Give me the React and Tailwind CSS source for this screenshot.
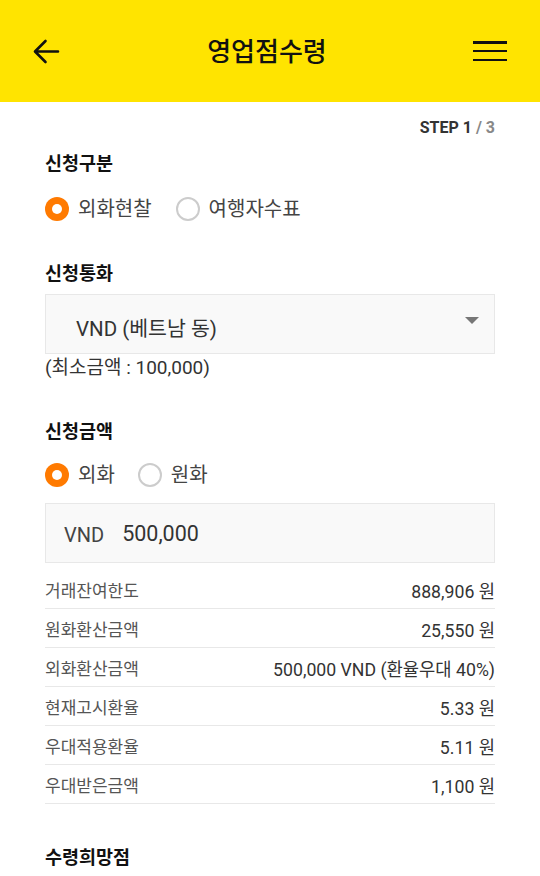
import React, { useState } from "react";

const font = { fontFamily: '"Roboto", "Noto Sans CJK KR", sans-serif' };

const Radio = ({ checked, label, onClick }) => (
  <button onClick={onClick} className="flex items-center gap-[9px]">
    {checked ? (
      <span className="w-[24px] h-[24px] rounded-full bg-[#ff7a00] flex items-center justify-center">
        <span className="w-[10px] h-[10px] rounded-full bg-white" />
      </span>
    ) : (
      <span className="w-[24px] h-[24px] rounded-full border-2 border-[#cccccc] bg-white" />
    )}
    <span className="text-[20px] text-[#444]">{label}</span>
  </button>
);

const Label = ({ children, className = "" }) => (
  <h2 className={`text-[18.5px] font-bold text-[#111] leading-none ${className}`}>{children}</h2>
);

export default function App() {
  const [type, setType] = useState("cash");
  const [unit, setUnit] = useState("foreign");

  const rows = [
    ["거래잔여한도", "888,906 원"],
    ["원화환산금액", "25,550 원"],
    ["외화환산금액", "500,000 VND (환율우대 40%)"],
    ["현재고시환율", "5.33 원"],
    ["우대적용환율", "5.11 원"],
    ["우대받은금액", "1,100 원"],
  ];

  return (
    <div className="bg-white min-h-screen" style={font}>
      {/* Header */}
      <div className="bg-[#ffe400] h-[102px] px-[33px] flex items-center justify-between">
        <button className="w-[28px] h-[26px] flex items-center">
          <svg width="27" height="25" viewBox="0 0 27 25" fill="none" stroke="#111" strokeWidth="2.6" strokeLinecap="round" strokeLinejoin="round">
            <path d="M25 12.5H2.5M12.5 2L2 12.5 12.5 23" />
          </svg>
        </button>
        <h1 className="text-[26px] font-medium text-[#111] mt-[2px]">영업점수령</h1>
        <button className="w-[34px] h-[26px] flex flex-col justify-between py-[3px]">
          <span className="block h-[2.5px] bg-[#111]" />
          <span className="block h-[2.5px] bg-[#111]" />
          <span className="block h-[2.5px] bg-[#111]" />
        </button>
      </div>

      <div className="px-[45px]">
        <p className="text-right text-[16px] font-bold text-[#333] mt-[18px] leading-none">
          STEP 1 <span className="text-[#888] font-bold">/ 3</span>
        </p>

        <Label className="mt-[19px]">신청구분</Label>
        <div className="flex items-center gap-[24px] mt-[20px]">
          <Radio checked={type === "cash"} label="외화현찰" onClick={() => setType("cash")} />
          <Radio checked={type === "check"} label="여행자수표" onClick={() => setType("check")} />
        </div>

        <Label className="mt-[41px]">신청통화</Label>
        <div className="mt-[11px] h-[60px] bg-[#f9f9f9] border border-[#e8e8e8] flex items-center justify-between pl-[30px] pr-[15px]">
          <span className="text-[20.5px] text-[#333] mt-[11px]">VND (베트남 동)</span>
          <svg width="14" height="7" viewBox="0 0 14 7" className="-mt-[7px]">
            <path d="M0 0h14L7 7z" fill="#777" />
          </svg>
        </div>
        <p className="text-[19px] text-[#333] leading-[28px]">(최소금액 : 100,000)</p>

        <Label className="mt-[41px]">신청금액</Label>
        <div className="flex items-center gap-[23px] mt-[18px]">
          <Radio checked={unit === "foreign"} label="외화" onClick={() => setUnit("foreign")} />
          <Radio checked={unit === "won"} label="원화" onClick={() => setUnit("won")} />
        </div>
        <div className="mt-[13px] h-[60px] bg-[#f9f9f9] border border-[#e8e8e8] flex items-center pl-[18px] gap-[18px]">
          <span className="text-[20px] text-[#444] mt-[5px]">VND</span>
          <span className="text-[21.5px] text-[#333] mt-[3px]">500,000</span>
        </div>

        <div className="mt-[7px]">
          {rows.map(([k, v]) => (
            <div key={k} className="h-[39px] flex items-center justify-between border-b border-[#e8e8e8] text-[17px]">
              <span className="text-[#555] mt-[7px]">{k}</span>
              <span className="text-[#333] text-[17.7px] mt-[7px]">{v}</span>
            </div>
          ))}
        </div>

        <Label className="mt-[45px]">수령희망점</Label>
      </div>
    </div>
  );
}
